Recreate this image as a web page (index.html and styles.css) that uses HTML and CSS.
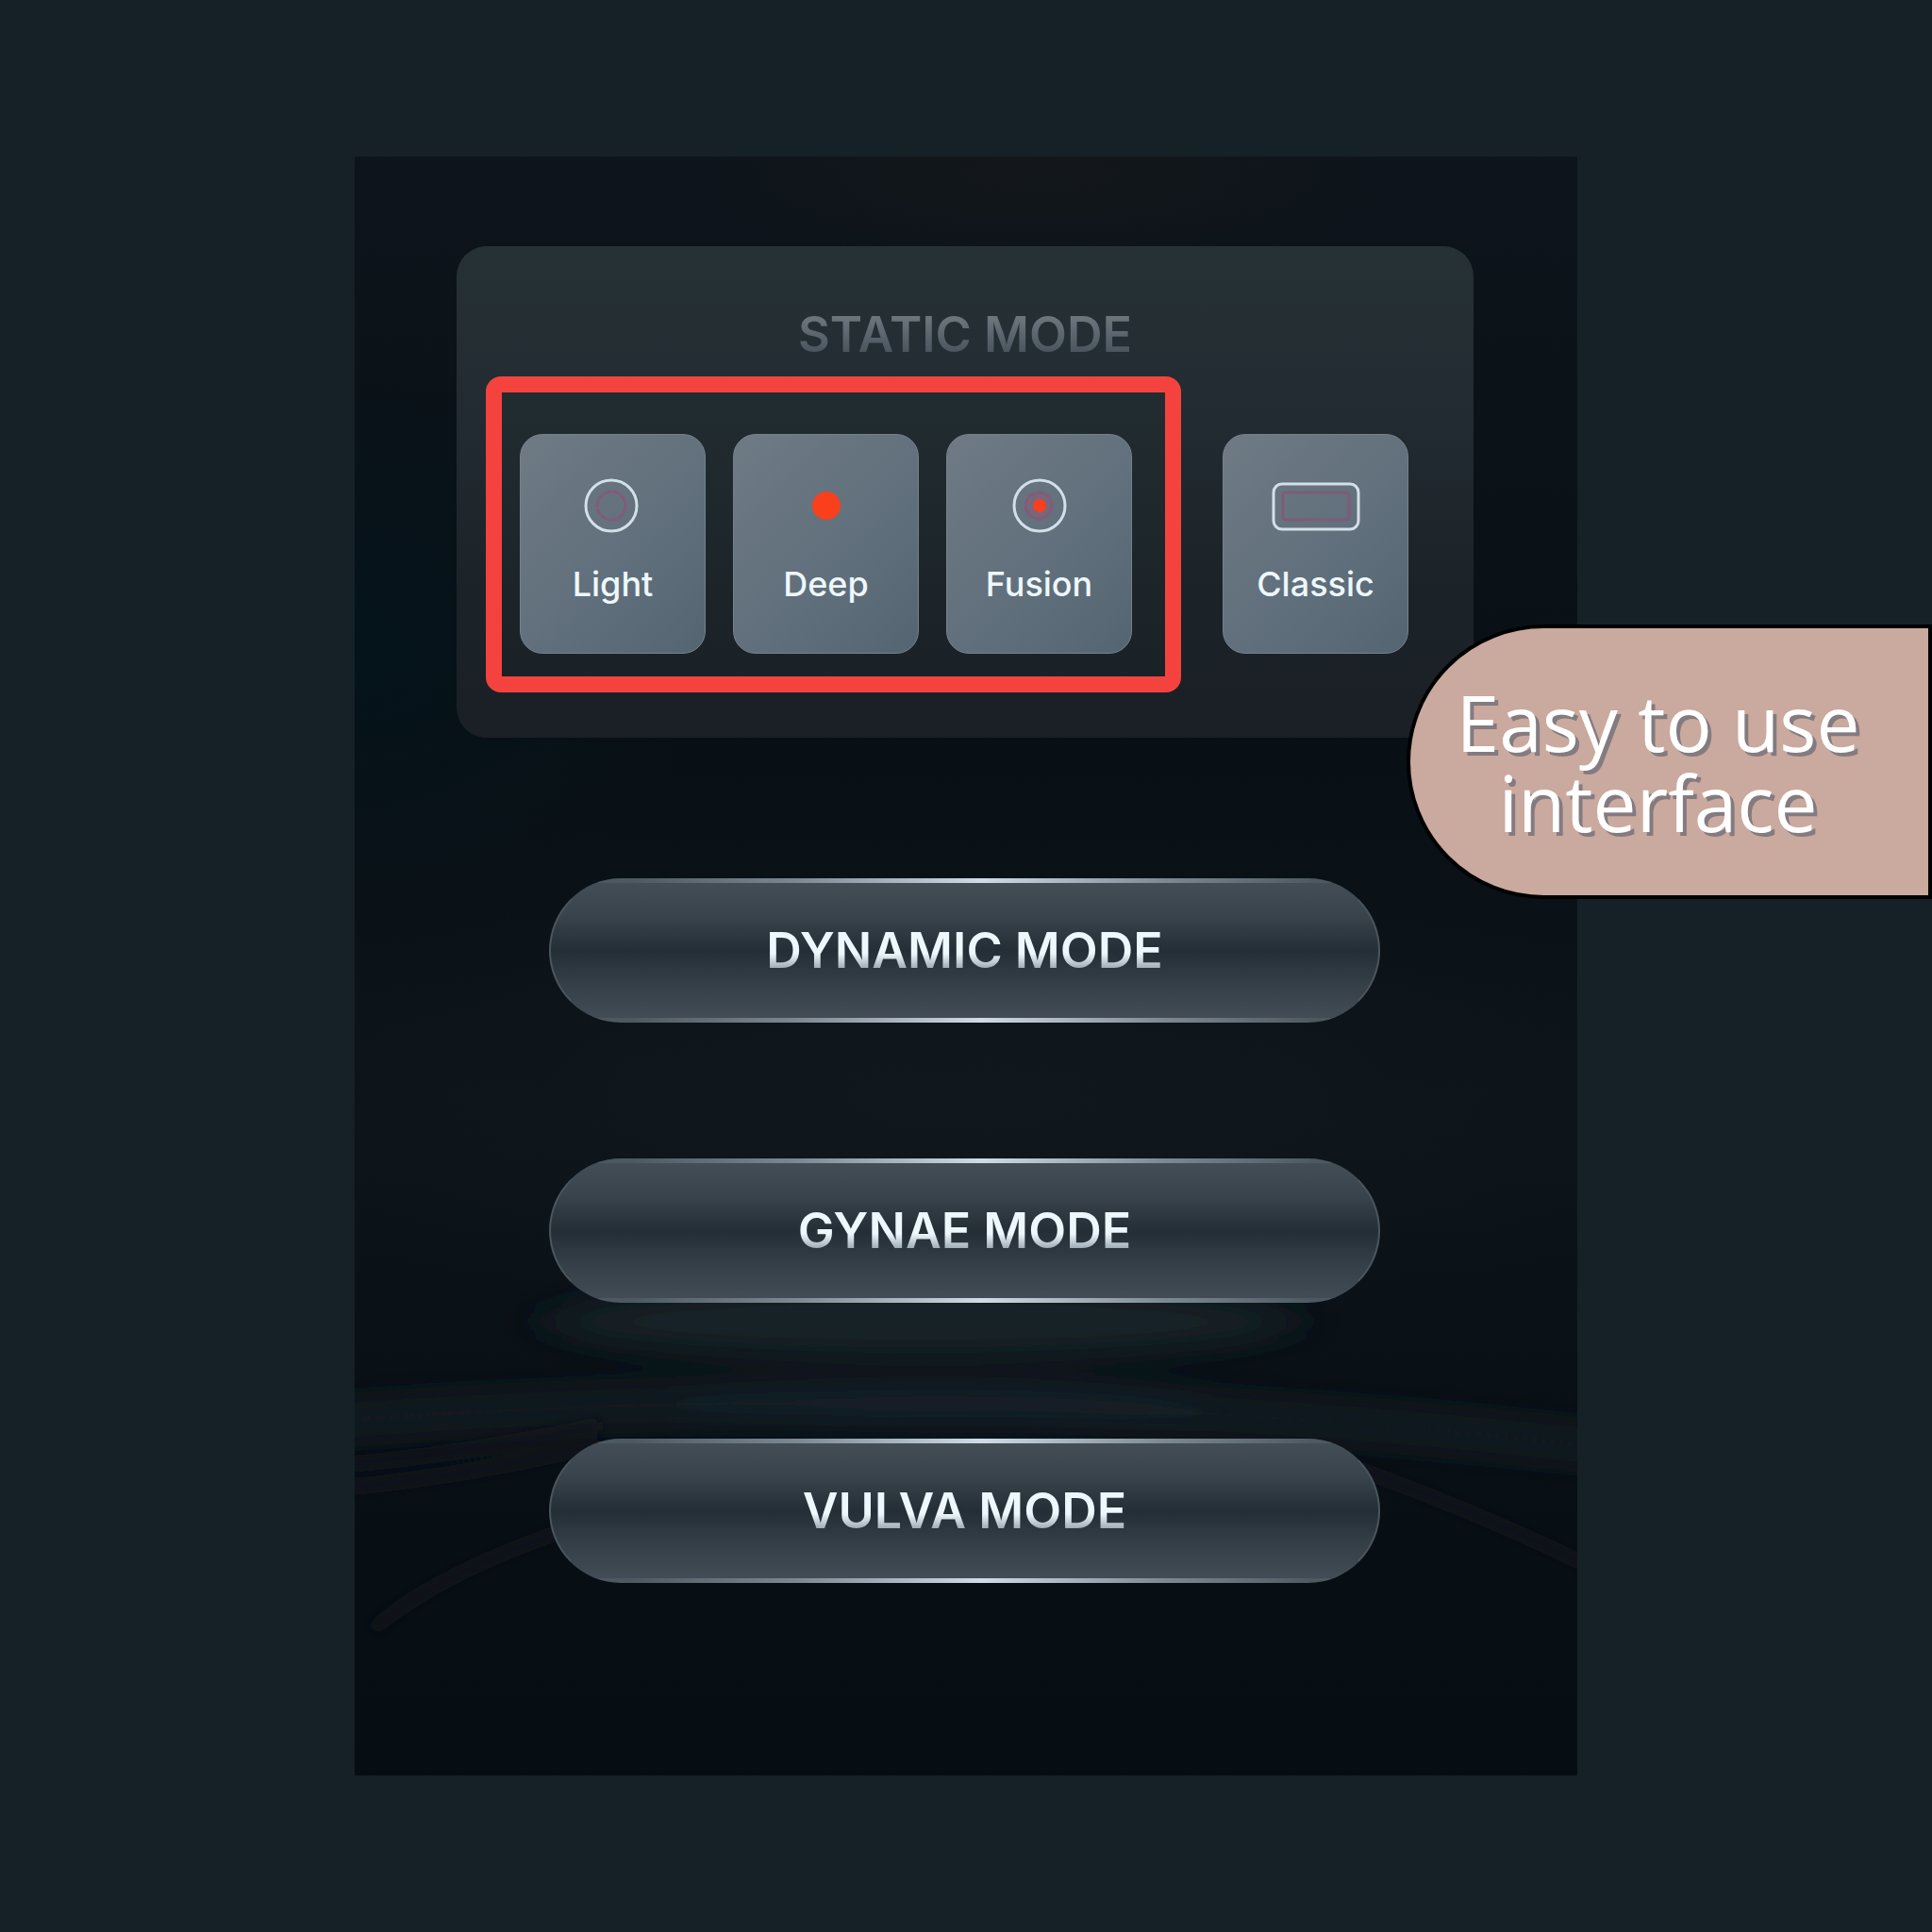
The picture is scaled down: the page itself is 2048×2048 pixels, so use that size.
FILE: index.html
```
<!DOCTYPE html>
<html lang="en">
<head>
<meta charset="utf-8">
<meta name="viewport" content="width=device-width, initial-scale=1">
<title>Mode selection</title>
<link rel="stylesheet" href="styles.css">
</head>
<body>
<main class="page">
  <div class="screen">
    <svg class="glow" viewBox="0 0 1296 1716" preserveAspectRatio="none" aria-hidden="true">
      <defs>
        <filter id="soft" x="-30%" y="-150%" width="160%" height="400%"><feGaussianBlur stdDeviation="30 16"/></filter>
        <filter id="fine" x="-20%" y="-20%" width="140%" height="140%"><feGaussianBlur stdDeviation="6"/></filter>
      </defs>
      <g filter="url(#soft)">
        <path d="M-80 1345Q640 1285 1380 1375" fill="none" stroke="#161b20" stroke-width="36"/>
        <ellipse cx="620" cy="1322" rx="290" ry="20" fill="#18242b"/>
        <ellipse cx="600" cy="1235" rx="400" ry="38" fill="#152027"/>
      </g>
      <g fill="none" stroke="#12181d" stroke-width="10" filter="url(#fine)">
        <path d="M-20 1387Q120 1375 260 1345"/>
        <path d="M-20 1412Q120 1400 260 1365"/>
        <path d="M20 1560Q90 1500 240 1450"/>
        <path d="M1060 1390Q1200 1440 1320 1500"/>
      </g>
    </svg>

    <section class="panel" aria-labelledby="static-title">
      <h1 class="panel-title" id="static-title">STATIC MODE</h1>
      <div class="choices">
        <div class="highlight">
          <button class="card" type="button">
            <svg class="icon" viewBox="0 0 100 64" aria-hidden="true">
              <circle cx="48" cy="32" r="27" fill="none" stroke="#d3e0ea" stroke-width="3"/>
              <circle cx="48" cy="32" r="15" fill="none" stroke="#85597a" stroke-width="3" stroke-dasharray="8 1"/>
            </svg>
            <span>Light</span>
          </button>
          <button class="card" type="button">
            <svg class="icon" viewBox="0 0 100 64" aria-hidden="true">
              <circle cx="50" cy="32" r="15" fill="#fa3f1d"/>
            </svg>
            <span>Deep</span>
          </button>
          <button class="card" type="button">
            <svg class="icon" viewBox="0 0 100 64" aria-hidden="true">
              <circle cx="50" cy="32" r="27" fill="none" stroke="#d3e0ea" stroke-width="3"/>
              <circle cx="49" cy="32" r="14" fill="#77677a" stroke="#85597a" stroke-width="3" stroke-dasharray="8 1"/>
              <circle cx="50" cy="32" r="7" fill="#fa3f1d"/>
            </svg>
            <span>Fusion</span>
          </button>
        </div>
        <button class="card card-single" type="button">
          <svg class="icon" viewBox="0 0 100 64" aria-hidden="true">
            <rect x="5" y="9" width="90" height="48" rx="9" fill="none" stroke="#d3e0ea" stroke-width="3"/>
            <rect x="15" y="18" width="70" height="29" rx="3" fill="none" stroke="#7d5c78" stroke-width="3"/>
          </svg>
          <span>Classic</span>
        </button>
      </div>
    </section>

    <nav class="modes" aria-label="Other modes">
      <button class="pill" type="button"><span>DYNAMIC MODE</span></button>
      <button class="pill" type="button"><span>GYNAE MODE</span></button>
      <button class="pill" type="button"><span>VULVA MODE</span></button>
    </nav>
  </div>

  <p class="callout">Easy to use interface</p>
</main>
</body>
</html>
```

FILE: styles.css
```
* {
  box-sizing: border-box;
}

body {
  margin: 0;
  background: #162027;
  color: #eef7fd;
  font-family: Inter, "Liberation Sans", sans-serif;
}

.page {
  position: relative;
  min-height: 100vh;
  padding: 166px 0;
  overflow: hidden;
}

.screen {
  position: relative;
  isolation: isolate;
  max-width: 1296px;
  margin: 0 auto;
  padding: 95px 110px 204px 108px;
  background:
    radial-gradient(ellipse 30% 6% at 56% 1%, #13171b, transparent),
    radial-gradient(ellipse 30% 18% at 0 30%, #04131a, transparent),
    radial-gradient(ellipse 70% 14% at 50% 58%, #10181d, transparent),
    linear-gradient(#0d141b, #091015 35%, #0c1319 60%, #080f14 85%, #060e14);
}

.glow {
  position: absolute;
  inset: 0;
  z-index: -1;
  width: 100%;
  height: 100%;
}

.panel {
  padding: 64px 69px 48px 31px;
  border-radius: 32px;
  background: linear-gradient(#263136, #222b31 35%, #1b2329 70%, #1b1f26);
}

.panel-title {
  margin: 0 0 14px 38px;
  background: linear-gradient(#6c757c 20%, #4b555e 80%);
  background-clip: text;
  color: transparent;
  font-size: 52px;
  font-weight: 600;
  line-height: 60px;
  text-align: center;
}

.choices {
  display: flex;
  align-items: flex-end;
  gap: 44px;
}

.highlight {
  display: flex;
  flex: 1;
  gap: 29px;
  padding: 44px 35px 24px 19px;
  border: 17px solid #f4433f;
  border-radius: 16px;
  background: linear-gradient(#212c31, #1a2127);
}

.card {
  display: flex;
  flex: 1 1 0;
  flex-direction: column;
  align-items: center;
  gap: 31px;
  min-width: 0;
  padding: 43px 0 53px;
  border: 1px solid #74818b;
  border-radius: 24px;
  background: linear-gradient(135deg, #6f7a84, #62717d 50%, #546572);
  color: inherit;
  font: 500 36px/40px Inter, "Liberation Sans", sans-serif;
  cursor: pointer;
}

.card-single {
  flex: 0 0 197px;
  margin-bottom: 41px;
}

.icon {
  width: 100px;
  max-width: 100%;
  height: 64px;
}

.modes {
  display: grid;
  gap: 144px;
  margin: 149px 99px 0 98px;
}

.pill {
  height: 153px;
  padding: 0;
  overflow: hidden;
  border: 2px solid #4a565e;
  border-radius: 77px;
  background:
    linear-gradient(90deg, #4d5961 10%, #7c8993 30%, #cfdce8 52%, #7c8993 74%, #4d5961 92%) top / 100% 5px no-repeat border-box,
    linear-gradient(90deg, #4d5961 10%, #7c8993 30%, #cfdce8 52%, #7c8993 74%, #4d5961 92%) bottom / 100% 5px no-repeat border-box,
    linear-gradient(#444f57, #39444c 25%, #242e37 50%, #354048 75%, #454e58) border-box;
  border-top-color: transparent;
  border-bottom-color: transparent;
  font: 600 52px/60px Inter, "Liberation Sans", sans-serif;
  cursor: pointer;
}

.pill span {
  background: linear-gradient(#eef7fd 55%, #8f9ca6 85%);
  background-clip: text;
  color: transparent;
}

.callout {
  position: absolute;
  top: 662px;
  right: 0;
  display: flex;
  align-items: center;
  width: 557px;
  height: 291px;
  margin: 0;
  padding: 0 68px 0 44px;
  border: 4px solid #000;
  border-radius: 146px 0 0 146px;
  background: #caa99e;
  color: #fff;
  font: 400 82px/85px "Open Sans", "Noto Sans", sans-serif;
  text-align: center;
  text-shadow: 4px 4px 0 #837b80;
}

@media (max-width: 1200px) {
  .screen {
    padding: 48px 24px;
  }

  .choices,
  .highlight {
    flex-wrap: wrap;
  }

  .card {
    flex-basis: 150px;
  }

  .modes {
    gap: 48px;
    margin: 48px 0 0;
  }

  .callout {
    position: static;
    margin: 48px 0 0 auto;
    max-width: 100%;
  }
}
```
